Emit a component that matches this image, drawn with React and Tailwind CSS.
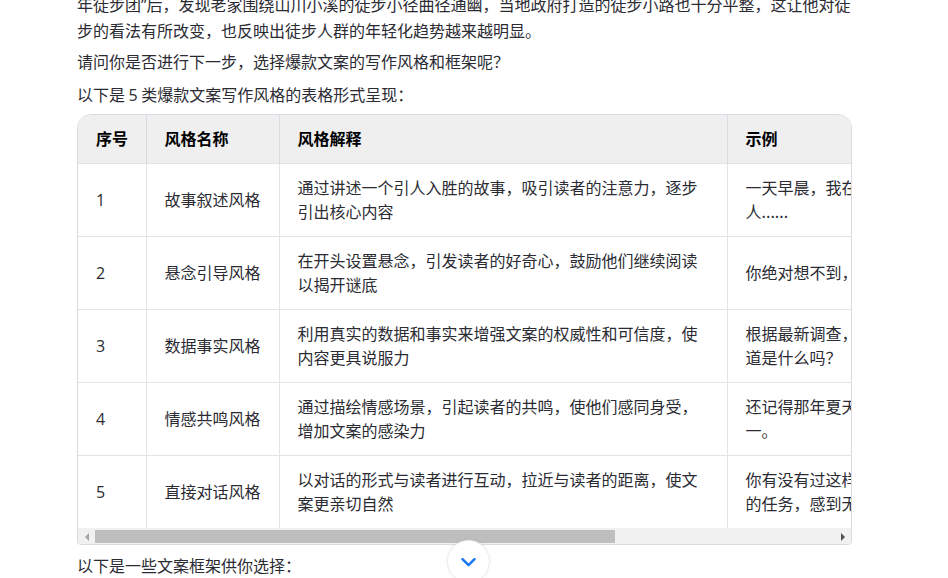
const rows = [
  ['1', '故事叙述风格', '通过讲述一个引人入胜的故事，吸引读者的注意力，逐步引出核心内容', '一天早晨，我在公园里遇到了一位特别的老', '人......'],
  ['2', '悬念引导风格', '在开头设置悬念，引发读者的好奇心，鼓励他们继续阅读以揭开谜底', '你绝对想不到，这个小习惯竟然会改变你的一生', ''],
  ['3', '数据事实风格', '利用真实的数据和事实来增强文案的权威性和可信度，使内容更具说服力', '根据最新调查，超过八成的人都有这个问题，', '道是什么吗？'],
  ['4', '情感共鸣风格', '通过描绘情感场景，引起读者的共鸣，使他们感同身受，增加文案的感染力', '还记得那年夏天吗？那是我最难忘的时光之', '一。'],
  ['5', '直接对话风格', '以对话的形式与读者进行互动，拉近与读者的距离，使文案更亲切自然', '你有没有过这样的经历：面对一项突如其来', '的任务，感到无从下手？'],
]

const font = { fontFamily: '"Noto Sans CJK SC", sans-serif' }

export default function App() {
  return (
    <div className="relative h-[578px] w-[948px] overflow-hidden bg-white text-[16px] text-[#2b2b33]" style={font}>
      <div className="ml-[77px] w-[775px] -mt-[9px]">
        <p className="leading-[26px] whitespace-nowrap">年徒步团<span className="font-['Open_Sans']">”</span>后，发现老家围绕山川小溪的徒步小径曲径通幽，当地政府打造的徒步小路也十分平整，这让他对徒</p>
        <p className="-mt-px leading-[26px]">步的看法有所改变，也反映出徒步人群的年轻化趋势越来越明显。</p>
        <p className="mt-[5px] leading-[26px]">请问你是否进行下一步，选择爆款文案的写作风格和框架呢？</p>
        <p className="mt-[7px] leading-[26px]">以下是 <span className="font-['Open_Sans']">5</span> 类爆款文案写作风格的表格形式呈现：</p>

        <div className="mt-[6px] h-[431px] overflow-hidden rounded-t-[14px] rounded-b-[4px] border border-[#d8dbe2]">
          <div className="h-[413px] overflow-hidden">
            <table className="w-[1103px] table-fixed border-collapse">
              <thead>
                <tr className="h-[48px] bg-[#efeff0] text-left font-bold text-black">
                  <th className="w-[68px] border-r border-[#d8dbe2] pb-[2px] pl-[18px]">序号</th>
                  <th className="w-[133px] border-r border-[#d8dbe2] pb-[2px] pl-[18px]">风格名称</th>
                  <th className="w-[448px] border-r border-[#d8dbe2] pb-[2px] pl-[18px]">风格解释</th>
                  <th className="pb-[2px] pl-[18px]">示例</th>
                </tr>
              </thead>
              <tbody>
                {rows.map((r) => (
                  <tr key={r[0]} className="h-[73px] border-t border-[#e3e3e8]">
                    <td className="border-r border-[#e3e3e8] pl-[18px] font-['Open_Sans'] text-[16px]">{r[0]}</td>
                    <td className="border-r border-[#e3e3e8] pb-[2px] pl-[18px]">{r[1]}</td>
                    <td className="border-r border-[#e3e3e8] px-[18px] pb-[2px] leading-[24px]">{r[2]}</td>
                    <td className="px-[18px] pb-[2px] leading-[24px] whitespace-nowrap">
                      {r[3]}
                      {r[4] && <br />}
                      {r[4]}
                    </td>
                  </tr>
                ))}
              </tbody>
            </table>
          </div>

          <div className="flex h-[17px] items-center bg-[#f1f1f1]">
            <div className="flex w-[17px] shrink-0 justify-center">
              <span className="h-0 w-0 border-y-[4px] border-r-[4px] border-y-transparent border-r-[#a3a3a3]" />
            </div>
            <div className="h-[13px] flex-1">
              <div className="h-[13px] w-[520px] bg-[#bebebe]" />
            </div>
            <div className="flex w-[17px] shrink-0 justify-center">
              <span className="h-0 w-0 border-y-[4px] border-l-[4px] border-y-transparent border-l-[#505050]" />
            </div>
          </div>
        </div>

        <p className="mt-[7px] leading-[26px]">以下是一些文案框架供你选择：</p>
      </div>

      <button className="absolute left-[447px] top-[540px] flex h-[43px] w-[43px] items-center justify-center rounded-full border border-[#ececf0] bg-white pt-[2px] shadow-[0_0_4px_rgba(0,0,0,0.05)]">
        <svg width="15" height="9" viewBox="0 0 15 9" fill="none">
          <path d="M1.5 1.2 L7.5 7.2 L13.5 1.2" stroke="#1677f0" strokeWidth="2.4" strokeLinecap="round" strokeLinejoin="round" />
        </svg>
      </button>
    </div>
  )
}
